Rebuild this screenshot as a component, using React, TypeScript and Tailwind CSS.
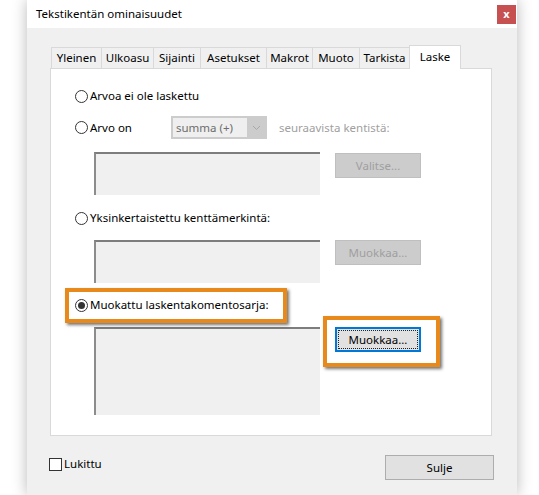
import React from "react";

const font = { fontFamily: '"Noto Sans", "Segoe UI", sans-serif' };

function Radio({ checked = false }: { checked?: boolean }) {
  return (
    <span className="w-[13px] h-[13px] shrink-0 rounded-full border border-[#333] bg-white flex items-center justify-center">
      {checked && <span className="w-[7px] h-[7px] rounded-full bg-[#333]" />}
    </span>
  );
}

function RadioRow({ label, checked }: { label: string; checked?: boolean }) {
  return (
    <div className="flex items-center h-4 gap-[2px]">
      <Radio checked={checked} />
      <span className="text-[11.5px] text-black leading-4">{label}</span>
    </div>
  );
}

function Field({ tall = false }: { tall?: boolean }) {
  return (
    <div
      className={`w-[226px] ${tall ? "h-[88px]" : "h-[43px]"} bg-[#f0f0f0] border-t-2 border-l-2 border-t-[#7d7d7d] border-l-[#8c8c8c]`}
    />
  );
}

function DisabledButton({ label }: { label: string }) {
  return (
    <div className="w-[86px] h-[25px] bg-[#cccccc] border border-[#bfbfbf] flex items-center justify-center text-[11.5px] text-[#9f9f9f]">
      {label}
    </div>
  );
}

const tabs = [
  { name: "Yleinen", w: "w-[51px]" },
  { name: "Ulkoasu", w: "w-[53px]" },
  { name: "Sijainti", w: "w-[48px]" },
  { name: "Asetukset", w: "w-[67px]" },
  { name: "Makrot", w: "w-[47px]" },
  { name: "Muoto", w: "w-[48px]" },
  { name: "Tarkista", w: "w-[51px]" },
];

export default function App() {
  return (
    <div className="w-[539px] h-[495px] bg-white overflow-hidden flex" style={font}>
      <div className="w-[27px] shrink-0" />
      <div className="w-[490px] h-[495px] flex flex-col bg-[#f0f0f0] shadow-[0_0_14px_rgba(0,0,0,0.28)]">
        {/* title bar */}
        <div className="h-[28px] bg-white flex items-start justify-between">
          <span className="pl-[9px] pt-[6px] text-[11.5px] leading-4 text-black">Tekstikentän ominaisuudet</span>
          <div className="mt-[5px] mr-[1px] w-[19px] h-[19px] bg-[#c75050] flex items-center justify-center text-white text-[11px] font-bold leading-none pb-[2px]">
            x
          </div>
        </div>

        <div className="flex flex-col pl-[23px] pr-[25px]">
          {/* tabs */}
          <div className="flex items-end h-[23px] mt-[17px] pl-[1px] relative z-10">
            {tabs.map((t) => (
              <div
                key={t.name}
                className={`${t.w} h-[21px] -ml-px first:ml-0 border border-b-0 border-[#d9d9d9] bg-[#f0f0f0] flex items-center justify-center text-[11.5px] text-black`}
              >
                {t.name}
              </div>
            ))}
            <div className="w-[52px] h-[24px] -ml-px -mb-px border border-b-0 border-[#d9d9d9] bg-white flex items-start justify-center pt-[2px] text-[11.5px] text-black">
              Laske
            </div>
          </div>

          {/* panel */}
          <div className="h-[368px] bg-white border border-[#d9d9d9] pl-[24px] pt-[19px] flex flex-col">
            <RadioRow label="Arvoa ei ole laskettu" />

            <div className="flex items-center h-[23px] mt-[12px]">
              <div className="w-[96px]">
                <RadioRow label="Arvo on" />
              </div>
              <div className="w-[96px] h-[23px] bg-[#cccccc] p-[2px] flex">
                <div className="w-[74px] bg-[#efefef] flex items-center pl-[3px] text-[11.5px] text-[#6d6d6d]">summa (+)</div>
                <div className="flex-1 flex items-center justify-center">
                  <svg width="9" height="6" viewBox="0 0 9 6">
                    <path d="M1 1l3.5 3.5L8 1" fill="none" stroke="#a8a8a8" strokeWidth="1" />
                  </svg>
                </div>
              </div>
              <span className="ml-[12px] text-[11.5px] text-[#a0a0a0]">seuraavista kentistä:</span>
            </div>

            <div className="flex items-start gap-[15px] mt-[13px] ml-[19px]">
              <Field />
              <div className="mt-[1px]">
                <DisabledButton label="Valitse..." />
              </div>
            </div>

            <div className="mt-[15px]">
              <RadioRow label="Yksinkertaistettu kenttämerkintä:" />
            </div>

            <div className="flex items-start gap-[15px] mt-[14px] ml-[19px]">
              <Field />
              <DisabledButton label="Muokkaa..." />
            </div>

            <div className="mt-[14px] relative self-start">
              <div className="absolute left-[-10px] top-[-9px] w-[222px] h-[35px] border-4 border-[#e8891c] shadow-[2px_2px_3px_rgba(0,0,0,0.55)]" />
              <RadioRow label="Muokattu laskentakomentosarja:" checked />
            </div>

            <div className="flex items-start gap-[15px] mt-[14px] ml-[19px]">
              <Field tall />
              <div className="relative">
                <div className="absolute left-[-12px] top-[-11px] w-[117px] h-[51px] border-4 border-[#e8891c] shadow-[2px_2px_3px_rgba(0,0,0,0.55)]" />
                <div className="relative w-[86px] h-[25px] bg-[#e1e1e1] border-2 border-[#0078d7] p-px">
                  <div className="w-full h-full border border-dotted border-[#222] flex items-center justify-center text-[11.5px] text-black">
                    Muokkaa...
                  </div>
                </div>
              </div>
            </div>
          </div>

          {/* bottom row */}
          <div className="flex items-start justify-between mt-[19px]">
            <div className="flex items-center gap-[2px] mt-[1px] -ml-px">
              <span className="w-[13px] h-[13px] border border-[#333] bg-white" />
              <span className="text-[11.5px] text-black leading-4">Lukittu</span>
            </div>
            <div className="w-[109px] h-[25px] -mr-[2px] bg-[#e1e1e1] border border-[#adadad] flex items-center justify-center text-[11.5px] text-black">
              Sulje
            </div>
          </div>
        </div>
      </div>
    </div>
  );
}
